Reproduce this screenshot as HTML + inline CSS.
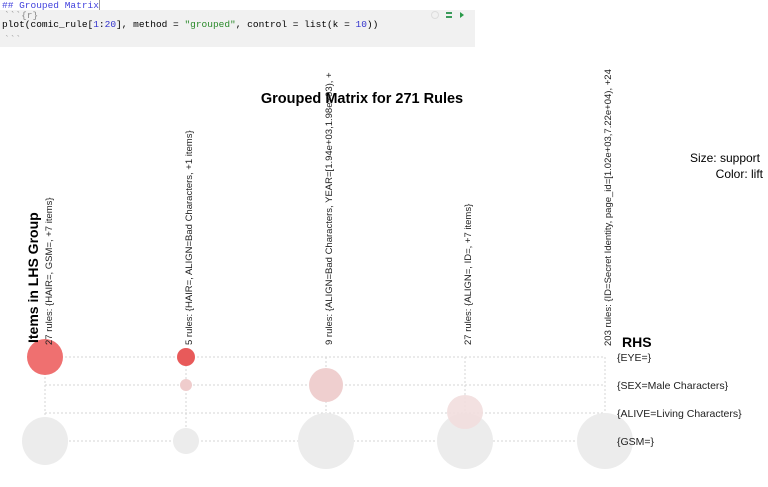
<!DOCTYPE html>
<html><head><meta charset="utf-8"><style>
body{margin:0;width:768px;height:487px;background:#fff;overflow:hidden;position:relative;font-family:"Liberation Sans",sans-serif}
.code{position:absolute;left:0;top:10px;width:475px;height:37px;background:#f1f1f1}
.mono{position:absolute;font-family:"Liberation Mono",monospace;font-size:9.5px;white-space:pre;line-height:11px}
</style></head><body>
<div class="mono" style="left:2px;top:0;color:#4444dd">## Grouped Matrix<span style="border-left:1px solid #999;"></span></div>
<div class="code"></div>
<div class="mono" style="left:4px;top:10px;color:#888">&#96;&#96;&#96;{r}</div>
<div class="mono" style="left:2px;top:19px;color:#000">plot(comic_rule[<span style="color:#3333cc">1</span>:<span style="color:#3333cc">20</span>], method = <span style="color:#2a8a2a">"grouped"</span>, control = list(k = <span style="color:#3333cc">10</span>))</div>
<div class="mono" style="left:4px;top:34px;color:#999">&#96;&#96;&#96;</div>
<svg style="position:absolute;left:430px;top:10px" width="40" height="12">
<circle cx="5" cy="5" r="3.5" fill="none" stroke="#ddd"/>
<rect x="16" y="2" width="6" height="2" fill="#3a9a5a"/><rect x="16" y="6" width="6" height="2" fill="#3a9a5a"/>
<path d="M30 2 L34 5 L30 8Z" fill="#2a9a4a"/>
</svg>
<svg style="position:absolute;left:0;top:0" width="768" height="487" font-family="Liberation Sans, sans-serif">
<g stroke="#d4d4d4" stroke-dasharray="2,2" stroke-width="1">
<line x1="45" y1="357" x2="605" y2="357"/><line x1="45" y1="385" x2="605" y2="385"/>
<line x1="45" y1="413" x2="605" y2="413"/><line x1="45" y1="441" x2="605" y2="441"/>
<line x1="45" y1="357" x2="45" y2="441"/><line x1="186" y1="357" x2="186" y2="441"/>
<line x1="326" y1="357" x2="326" y2="441"/><line x1="465" y1="357" x2="465" y2="441"/>
<line x1="605" y1="357" x2="605" y2="441"/>
</g>
<g fill="#ececec">
<ellipse cx="45" cy="441" rx="23" ry="24"/><ellipse cx="186" cy="441" rx="13" ry="13"/>
<ellipse cx="326" cy="441" rx="28" ry="28"/><ellipse cx="465" cy="441" rx="28" ry="28"/>
<ellipse cx="605" cy="441" rx="28" ry="28"/>
</g>
<ellipse cx="45" cy="357" rx="18" ry="18" fill="#ef7070"/>
<ellipse cx="186" cy="357" rx="9" ry="9" fill="#e85a5a"/>
<ellipse cx="186" cy="385" rx="6" ry="6" fill="#efcccc"/>
<ellipse cx="326" cy="385" rx="17" ry="17" fill="#efcfcf"/>
<ellipse cx="465" cy="412" rx="18" ry="17" fill="#f2dede" opacity="0.9"/>
<text x="362" y="103" font-size="14.5" font-weight="bold" text-anchor="middle">Grouped Matrix for 271 Rules</text>
<text x="760" y="162" font-size="12" text-anchor="end">Size: support</text>
<text x="763" y="178" font-size="12" text-anchor="end">Color: lift</text>
<text x="622" y="347" font-size="14" font-weight="bold">RHS</text>
<g font-size="10.5" fill="#222">
<text x="617" y="361">{EYE=}</text>
<text x="617" y="389">{SEX=Male Characters}</text>
<text x="617" y="417">{ALIVE=Living Characters}</text>
<text x="617" y="445">{GSM=}</text>
</g>
<text transform="translate(38,343) rotate(-90)" font-size="14" font-weight="bold">Items in LHS Group</text>
<g font-size="9.5" fill="#222">
<text transform="translate(52,345) rotate(-90)">27 rules: {HAIR=, GSM=, +7 items}</text>
<text transform="translate(192,345) rotate(-90)">5 rules: {HAIR=, ALIGN=Bad Characters, +1 items}</text>
<text transform="translate(332,345) rotate(-90)">9 rules: {ALIGN=Bad Characters, YEAR=[1.94e+03,1.98e+03), +</text>
<text transform="translate(471,345) rotate(-90)">27 rules: {ALIGN=, ID=, +7 items}</text>
<text transform="translate(611,346) rotate(-90)">203 rules: {ID=Secret Identity, page_id=[1.02e+03,7.22e+04), +24</text>
</g>
</svg>
</body></html>
